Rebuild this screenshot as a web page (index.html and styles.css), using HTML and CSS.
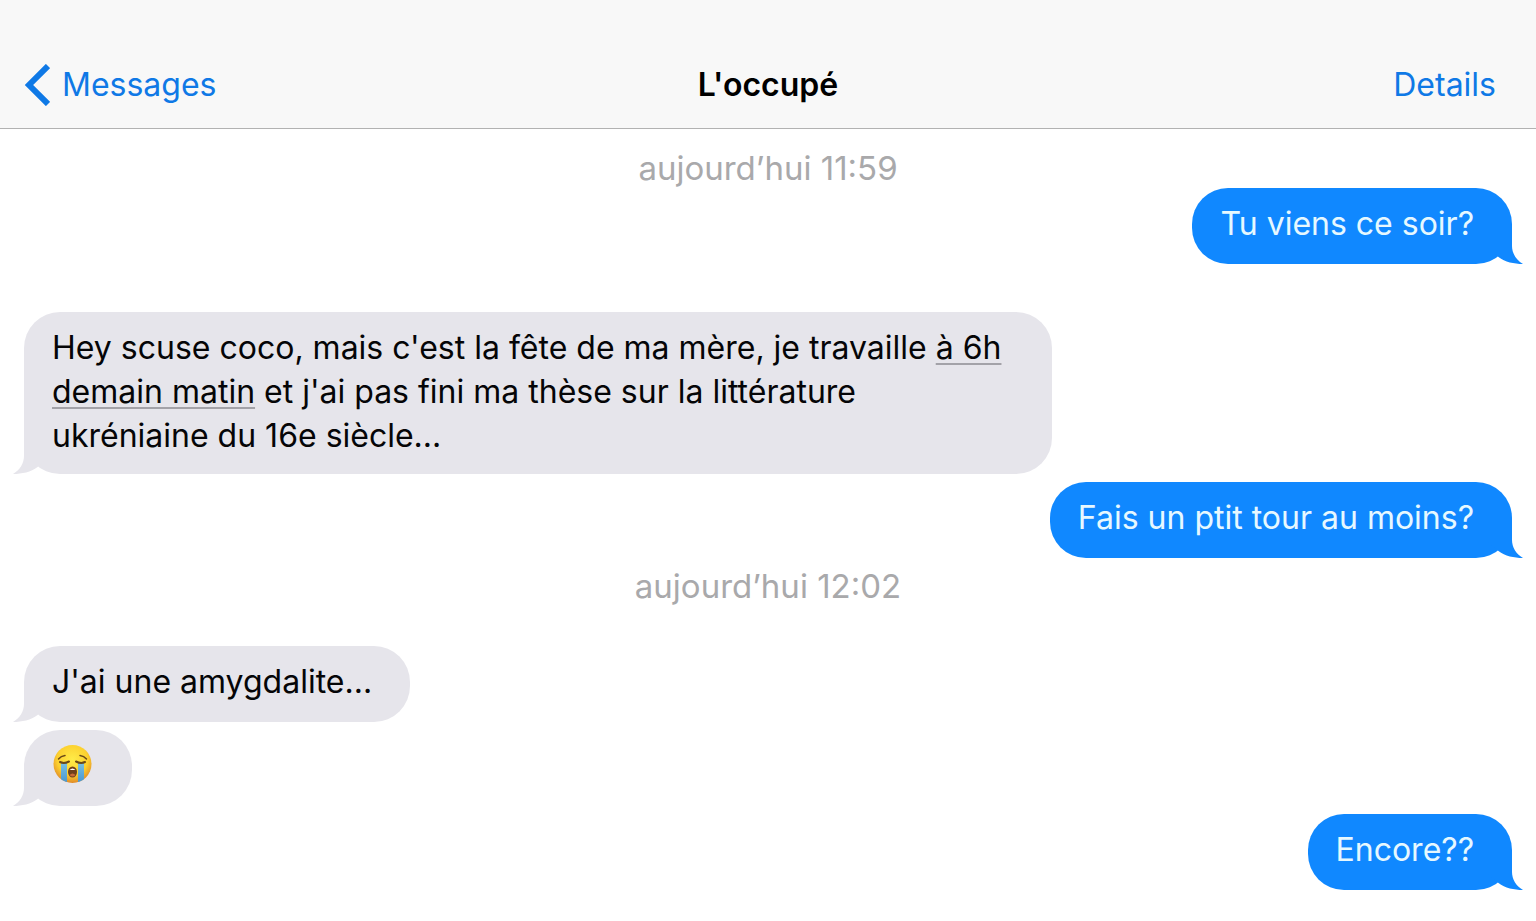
FILE: index.html
```html
<!DOCTYPE html>
<html lang="fr">
<head>
    <meta charset="UTF-8">
    <meta name="viewport" content="width=device-width, initial-scale=1.0">
    <title>L'occupé</title>
    <link rel="stylesheet" href="styles.css">
</head>
<body>

    <!-- Tail shared by all the bubbles -->
    <svg class="defs" aria-hidden="true">
        <symbol id="tail" viewBox="0 0 48 36">
            <path d="M12 0H36V18C36 25 40 32 47 36C38 36 29 34 22.500 29L12 20Z"/>
        </symbol>
    </svg>

    <header class="navbar">
        <a class="back" href="#">
            <svg class="chevron" viewBox="0 0 26 42" aria-hidden="true">
                <path d="M24 2L5 21L24 40" fill="none" stroke="currentColor" stroke-width="6"/>
            </svg>
            Messages
        </a>
        <h1>L'occupé</h1>
        <a class="details" href="#">Details</a>
    </header>

    <main class="thread">
        <time class="stamp">aujourd’hui 11:59</time>

        <div class="bubble sent">
            <p>Tu viens ce soir?</p>
            <svg class="tail" aria-hidden="true"><use href="#tail"/></svg>
        </div>

        <div class="bubble received spaced">
            <p>Hey scuse coco, mais c'est la fête de ma mère, je travaille <a href="#">à 6h demain matin</a> et j'ai pas fini ma thèse sur la littérature ukréniaine du 16e siècle...</p>
            <svg class="tail" aria-hidden="true"><use href="#tail"/></svg>
        </div>

        <div class="bubble sent">
            <p>Fais un ptit tour au moins?</p>
            <svg class="tail" aria-hidden="true"><use href="#tail"/></svg>
        </div>

        <time class="stamp">aujourd’hui 12:02</time>

        <div class="bubble received spaced">
            <p>J'ai une amygdalite...</p>
            <svg class="tail" aria-hidden="true"><use href="#tail"/></svg>
        </div>

        <div class="bubble received">
            <svg class="emoji" viewBox="0 0 42 40" role="img" aria-label="Visage qui pleure">
                <defs>
                    <radialGradient id="face" cx="50%" cy="38%" r="62%">
                        <stop offset="0" stop-color="#ffec48"/>
                        <stop offset="0.650" stop-color="#fcd02f"/>
                        <stop offset="1" stop-color="#e08a28"/>
                    </radialGradient>
                    <linearGradient id="tears" x1="0" y1="0" x2="0" y2="1">
                        <stop offset="0" stop-color="#78bfe0"/>
                        <stop offset="1" stop-color="#4a98d2"/>
                    </linearGradient>
                    <clipPath id="round"><circle cx="20.500" cy="20" r="19"/></clipPath>
                </defs>
                <circle cx="20.500" cy="20" r="19" fill="url(#face)"/>
                <g clip-path="url(#round)" fill="url(#tears)">
                    <path d="M9 19H15V38H9Z"/>
                    <path d="M26 19H32V38H26Z"/>
                </g>
                <g fill="none" stroke="#6b4a18" stroke-linecap="round">
                    <path d="M8 18Q12 20 17 17.500M33 18Q29 20 24 17.500" stroke-width="2"/>
                    <path d="M6.500 15Q9 12 13 11.500M34.500 15Q32 12 28 11.500" stroke-width="1.500"/>
                </g>
                <ellipse cx="20.500" cy="28" rx="4.500" ry="5.500" fill="#70401a"/>
                <path d="M17.500 26Q20.500 23 23.500 26Z" fill="#fff"/>
                <path d="M17.500 31Q20.500 28 23.500 31Q20.500 34 17.500 31Z" fill="#c96a35"/>
            </svg>
            <svg class="tail" aria-hidden="true"><use href="#tail"/></svg>
        </div>

        <div class="bubble sent">
            <p>Encore??</p>
            <svg class="tail" aria-hidden="true"><use href="#tail"/></svg>
        </div>
    </main>

</body>
</html>
```
FILE: styles.css
```css
* {
    box-sizing: border-box;
}

body {
    margin: 0;
    background-color: #fff;
    color: #050507;
    font-family: Inter, "Liberation Sans", sans-serif;
    font-size: 32px;
    line-height: 44px;
}

.defs {
    position: absolute;
    width: 0;
    height: 0;
}

/* Top bar */
.navbar {
    display: grid;
    grid-template-columns: 1fr auto 1fr;
    align-items: center;
    padding: 63px 40px 21px 24px;
    background-color: #f8f8f8;
    border-bottom: 1px solid #b2b2b2;
}

.navbar a {
    color: #0f79e6;
    text-decoration: none;
}

.navbar h1 {
    margin: 0;
    padding-left: 16px;
    color: #000;
    font-size: 32px;
    font-weight: 600;
}

.back {
    display: flex;
    align-items: center;
    gap: 12px;
}

.chevron {
    width: 26px;
    height: 42px;
}

.details {
    text-align: right;
}

/* Conversation */
.thread {
    display: flex;
    flex-direction: column;
    gap: 8px;
    padding: 11px 24px 31px;
}

.stamp {
    font-size: 33px;
    line-height: 40px;
    text-align: center;
    color: #a9a9ab;
}

.stamp:first-child {
    margin: 8px 0 -8px;
}

.bubble {
    position: relative;
    max-width: 1028px;
    min-height: 76px;
    padding: 14px 38px 16px 28px;
    border-radius: 36px;
}

.bubble p {
    margin: 0;
}

.sent {
    align-self: flex-end;
    background-color: #1088ff;
    color: #e6f8ff;
}

.received {
    align-self: flex-start;
    background-color: #e6e5eb;
}

.spaced {
    margin-top: 40px;
}

.stamp + .spaced {
    margin-top: 32px;
}

/* The tail hangs over the lower corner */
.tail {
    position: absolute;
    bottom: 0;
    width: 48px;
    height: 36px;
}

.sent .tail {
    right: -12px;
    fill: #1088ff;
}

.received .tail {
    left: -12px;
    fill: #e6e5eb;
    transform: scaleX(-1);
}

.bubble a {
    color: inherit;
    text-decoration: underline;
    text-decoration-color: #a3a2a8;
    text-decoration-thickness: 2px;
    text-decoration-skip-ink: none;
    text-underline-offset: 4px;
}

.emoji {
    display: block;
    width: 42px;
    height: 40px;
}
```
